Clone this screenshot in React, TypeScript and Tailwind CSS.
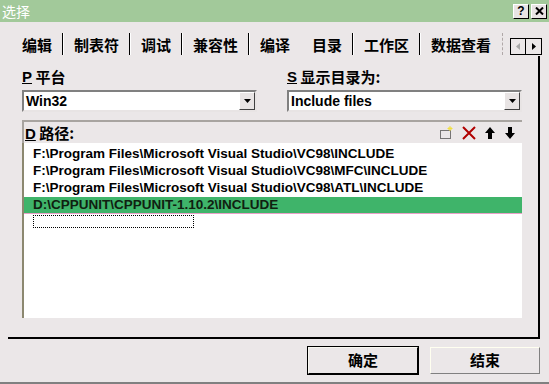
const cn = { fontFamily: '"Noto Sans CJK SC", "Liberation Sans", sans-serif' };
const lat = { fontFamily: '"Liberation Sans", "Noto Sans CJK SC", sans-serif' };

const tabs = ["编辑", "制表符", "调试", "兼容性", "编译", "目录", "工作区", "数据查看"];

const paths = [
  "F:\\Program Files\\Microsoft Visual Studio\\VC98\\INCLUDE",
  "F:\\Program Files\\Microsoft Visual Studio\\VC98\\MFC\\INCLUDE",
  "F:\\Program Files\\Microsoft Visual Studio\\VC98\\ATL\\INCLUDE",
];

function Sep() {
  return <div className="w-[2px] h-[22px] bg-black border-r border-white" />;
}

function Combo({ value }: { value: string }) {
  return (
    <div className="w-[235px] h-[22px] bg-white border-2 border-t-[#808080] border-l-[#808080] border-r-[#e8e4e4] border-b-[#e8e4e4] flex items-center">
      <span className="flex-1 pl-[2px] text-[14px] font-bold text-black" style={lat}>
        {value}
      </span>
      <div className="w-[16px] h-[18px] bg-[#e8e4e4] border border-t-white border-l-white border-r-[#404040] border-b-[#404040] flex items-center justify-center">
        <svg width="7" height="4" viewBox="0 0 7 4">
          <path d="M0 0h7L3.5 4z" fill="black" />
        </svg>
      </div>
    </div>
  );
}

export default function App() {
  return (
    <div className="w-[549px] h-[384px] bg-[#ebe7e8] flex flex-col border-b-2 border-[#808080] overflow-hidden">
      {/* Title bar */}
      <div className="h-[22px] bg-[#a2c99a] flex items-center justify-between pl-[2px] pr-[2px]">
        <span className="text-[14px] text-white leading-none" style={cn}>选择</span>
        <div className="flex gap-[2px]">
          <div className="w-[16px] h-[15px] bg-[#e8e4e4] border border-t-white border-l-white border-r-black border-b-black flex items-center justify-center text-[12px] font-bold leading-none" style={lat}>?</div>
          <div className="w-[16px] h-[15px] bg-[#e8e4e4] border border-t-white border-l-white border-r-black border-b-black flex items-center justify-center">
            <svg width="9" height="8" viewBox="0 0 9 8">
              <path d="M1 0.5l7 7M8 0.5l-7 7" stroke="black" strokeWidth="2" />
            </svg>
          </div>
        </div>
      </div>

      {/* Tabs */}
      <div className="mt-[10px] h-[24px] flex items-center pl-[22px]">
        {tabs.map((t, i) => (
          <div key={t} className="flex items-center">
            <span className="text-[15px] font-bold text-black leading-none" style={cn}>{t}</span>
            {i < 7 && (
              <div className="mx-[10px]">
                {i === 4 ? <div className="w-[2px]" /> : <Sep />}
              </div>
            )}
          </div>
        ))}
        <div className="ml-[11px] w-[1px] h-[22px] border-l border-dashed border-[#b0a8a8]" />
        <div className="ml-[7px] mt-[4px] flex h-[17px] border border-black">
          <div className="w-[15px] flex items-center justify-center border-r border-black">
            <svg width="4" height="7" viewBox="0 0 4 7"><path d="M4 0v7L0 3.5z" fill="#a8a8a8" /></svg>
          </div>
          <div className="w-[15px] flex items-center justify-center">
            <svg width="4" height="7" viewBox="0 0 4 7"><path d="M0 0v7L4 3.5z" fill="black" /></svg>
          </div>
        </div>
      </div>

      {/* Panel */}
      <div className="ml-[8px] w-[532px] h-[283px] border-r-2 border-b-2 border-black pl-[14px] pt-[12px] flex flex-col">
        <div className="flex gap-[30px]">
          <div className="flex flex-col">
            <div className="h-[16px] flex items-center text-[15px] font-bold text-black leading-none" style={cn}>
              <span className="underline" style={lat}>P</span>&nbsp;平台
            </div>
            <div className="mt-[6px]"><Combo value="Win32" /></div>
          </div>
          <div className="flex flex-col">
            <div className="h-[16px] flex items-center text-[15px] font-bold text-black leading-none" style={cn}>
              <span className="underline" style={lat}>S</span>&nbsp;显示目录为:
            </div>
            <div className="mt-[6px]"><Combo value="Include files" /></div>
          </div>
        </div>

        {/* Path header */}
        <div className="mt-[8px] w-[500px] h-[23px] border-t-2 border-l-2 border-[#a8a4a0] flex items-center justify-between pr-[6px]">
          <div className="text-[15px] font-bold text-black leading-none pl-[1px]" style={cn}>
            <span className="underline" style={lat}>D</span>&nbsp;路径:
          </div>
          <div className="flex items-center gap-[8px]">
            <svg width="15" height="14" viewBox="0 0 15 14">
              <rect x="1.5" y="4.5" width="10" height="8" fill="none" stroke="black" strokeDasharray="1 1" />
              <path d="M11 0v5M8.5 2.5h5M9.5 1l3 3M12.5 1l-3 3" stroke="#f0e040" strokeWidth="1" />
            </svg>
            <svg width="14" height="14" viewBox="0 0 14 14">
              <path d="M1 1l12 12M13 1L1 13" stroke="#b00000" strokeWidth="2" />
            </svg>
            <svg width="12" height="14" viewBox="0 0 12 14">
              <path d="M6 1L11 7H8V13H4V7H1z" fill="black" />
            </svg>
            <svg width="12" height="14" viewBox="0 0 12 14">
              <path d="M6 13L11 7H8V1H4V7H1z" fill="black" />
            </svg>
          </div>
        </div>

        {/* List */}
        <div className="w-[500px] h-[175px] bg-white border-l-2 border-[#8c8870] pt-[3px]">
          {paths.map((p) => (
            <div key={p} className="h-[17px] flex items-center pl-[9px] text-[13.5px] font-bold text-black" style={lat}>
              {p}
            </div>
          ))}
          <div className="h-[17px] flex items-center pl-[9px] bg-[#3fb46a] border-b border-[#e8a0c8] text-[13.5px] font-bold text-[#102010]" style={lat}>
            D:\CPPUNIT\CPPUNIT-1.10.2\INCLUDE
          </div>
          <div className="ml-[9px] mt-[1px] w-[161px] h-[13px] border border-dotted border-black" />
        </div>
      </div>

      {/* Buttons */}
      <div className="mt-[8px] flex justify-end gap-[12px] pr-[9px]">
        <div className="w-[110px] h-[27px] border border-t-[#f8f8f0] border-l-[#f8f8f0] border-r-black border-b-black outline outline-1 outline-black flex items-center justify-center text-[15px] font-bold text-black" style={cn}>
          确定
        </div>
        <div className="w-[110px] h-[27px] border border-t-[#fffff0] border-l-[#fffff0] border-r-[#808080] border-b-[#808080] flex items-center justify-center text-[15px] font-bold text-black" style={cn}>
          结束
        </div>
      </div>
    </div>
  );
}
